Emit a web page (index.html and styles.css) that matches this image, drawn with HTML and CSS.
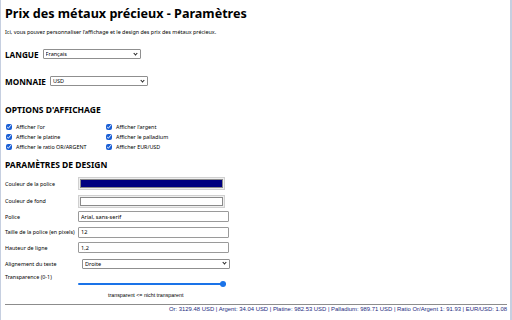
FILE: index.html
```html
<!DOCTYPE html>
<html lang="fr">
<head>
<meta charset="utf-8">
<title>Prix des métaux précieux - Paramètres</title>
<link rel="stylesheet" href="styles.css">
</head>
<body>
<div class="page">
  <h1 class="title">Prix des métaux précieux - Paramètres</h1>
  <p class="intro">Ici, vous pouvez personnaliser l'affichage et le design des prix des métaux précieux.</p>

  <div class="inline-field lang-row">
    <label class="big-label" for="lang">LANGUE</label>
    <span class="sel-wrap"><select id="lang" class="sel sel-lang"><option>Français</option></select></span>
  </div>

  <div class="inline-field cur-row">
    <label class="big-label" for="cur">MONNAIE</label>
    <span class="sel-wrap"><select id="cur" class="sel sel-cur"><option>USD</option></select></span>
  </div>

  <h2 class="section opt-title">OPTIONS D'AFFICHAGE</h2>
  <div class="checks">
    <label class="check"><input type="checkbox" checked> Afficher l'or</label>
    <label class="check"><input type="checkbox" checked> Afficher l'argent</label>
    <label class="check"><input type="checkbox" checked> Afficher le platine</label>
    <label class="check"><input type="checkbox" checked> Afficher le palladium</label>
    <label class="check"><input type="checkbox" checked> Afficher le ratio OR/ARGENT</label>
    <label class="check"><input type="checkbox" checked> Afficher EUR/USD</label>
  </div>

  <h2 class="section design-title">PARAMÈTRES DE DESIGN</h2>
  <div class="design">
    <div class="row r-color1"><span class="lbl">Couleur de la police</span><input class="color" type="color" value="#000080"></div>
    <div class="row r-color2"><span class="lbl">Couleur de fond</span><input class="color" type="color" value="#ffffff"></div>
    <div class="row r-text"><span class="lbl">Police</span><input class="txt" type="text" value="Arial, sans-serif"></div>
    <div class="row r-text"><span class="lbl">Taille de la police (en pixels)</span><input class="txt" type="text" value="12"></div>
    <div class="row r-text"><span class="lbl">Hauteur de ligne</span><input class="txt" type="text" value="1,2"></div>
    <div class="row r-sel"><span class="lbl">Alignement du texte</span><span class="sel-wrap sel-align-wrap"><select class="sel sel-align"><option>Droite</option></select></span></div>
    <div class="row r-transp"><span class="lbl">Transparence (0-1)</span></div>
    <div class="row r-range"><span class="lbl"></span><input class="range" type="range" min="0" max="1" step="0.1" value="1"></div>
    <div class="caption">transparent &lt;= nicht transparent</div>
  </div>

  <hr class="rule">
  <footer class="ticker">Or: 3129.48 USD | Argent: 34.04 USD | Platine: 982.53 USD | Palladium: 989.71 USD | Ratio Or/Argent 1: 91.93 | EUR/USD: 1.08</footer>
</div>
</body>
</html>
```

FILE: styles.css
```css
html, body {
  margin: 0;
  padding: 0;
  background: #ffffff;
}
body {
  font-family: "Noto Sans", "Open Sans", sans-serif;
  color: #000;
}
.page {
  box-sizing: border-box;
  width: 512px;
  height: 320px;
  border-left: 1px solid #c6cfe0;
  border-right: 2px solid #c6cfe0;
  padding: 0 3px 0 4px;
  overflow: hidden;
}
.title {
  margin: 0;
  padding-top: 5px;
  font-size: 12.6px;
  line-height: 18px;
  font-weight: 700;
}
.intro {
  margin: 5px 0 0;
  font-size: 5.4px;
  line-height: 8px;
}
.inline-field {
  display: flex;
  align-items: center;
  gap: 4px;
}
.lang-row { margin-top: 12px; height: 12px; }
.cur-row { margin-top: 15px; height: 12px; }
.big-label {
  font-size: 8.2px;
  font-weight: 700;
}
.sel-wrap {
  position: relative;
  display: inline-block;
  line-height: 0;
}
.sel-wrap::after {
  content: "";
  position: absolute;
  right: 4px;
  top: 2.5px;
  width: 2px;
  height: 2px;
  border-right: 1px solid #222;
  border-bottom: 1px solid #222;
  transform: rotate(45deg);
  pointer-events: none;
}
.sel {
  -webkit-appearance: none;
  appearance: none;
  box-sizing: border-box;
  height: 10px;
  font-family: "Noto Sans", sans-serif;
  font-size: 5.5px;
  line-height: 8px;
  padding: 0 8px 0 2px;
  margin: 0;
  border: 1px solid #8f8f8f;
  border-radius: 1px;
  background: #fff;
  color: #000;
}
.sel-lang { width: 98px; }
.sel-cur { width: 98px; }
.section {
  margin: 0;
  font-size: 8.5px;
  font-weight: 700;
  line-height: 12px;
}
.opt-title { margin-top: 17px; }
.checks {
  margin-top: 6px;
  display: grid;
  grid-template-columns: 100px 100px;
  row-gap: 0;
}
.check {
  display: flex;
  align-items: center;
  gap: 4px;
  height: 10px;
  font-size: 5.4px;
  padding-left: 1px;
}
.check input {
  margin: 0;
  width: 6px;
  height: 6px;
  accent-color: #1a5fd6;
}
.design-title { margin-top: 7px; }
.design {
  margin-top: 5px;
}
.row {
  display: flex;
  align-items: center;
  font-size: 5.4px;
}
.lbl {
  width: 73px;
  flex: none;
}
.r-color1 { height: 15px; }
.r-color2 { height: 16px; margin-top: 2px; }
.r-text { height: 15.5px; }
.r-sel { height: 16px; }
.r-transp { height: 9px; align-items: flex-end; }
.r-transp .lbl { line-height: 7px; }
.r-range { height: 6px; }
.color {
  box-sizing: border-box;
  width: 147px;
  height: 13px;
  padding: 1px;
  margin: 0;
  border: 1px solid #d0d0d0;
  background: #efefef;
  -webkit-appearance: none;
  appearance: none;
}
.color::-webkit-color-swatch-wrapper { padding: 0; }
.color::-webkit-color-swatch { border: 1px solid #8a8a8a; border-radius: 0; }
.txt {
  box-sizing: border-box;
  width: 151px;
  height: 11px;
  margin: 0;
  padding: 0 2px;
  border: 1px solid #9a9a9a;
  border-radius: 1px;
  font-family: "Noto Sans", sans-serif;
  font-size: 5.6px;
}
.sel-align-wrap { margin-left: 4px; }
.sel-align { width: 148px; }
.range {
  -webkit-appearance: none;
  appearance: none;
  width: 148px;
  height: 6px;
  margin: 0;
  background: transparent;
}
.range::-webkit-slider-runnable-track {
  height: 2px;
  background: #1a73e8;
  border-radius: 1px;
}
.range::-webkit-slider-thumb {
  -webkit-appearance: none;
  width: 6px;
  height: 6px;
  border-radius: 50%;
  background: #1a73e8;
  margin-top: -2px;
}
.caption {
  margin-top: 4px;
  padding-left: 103px;
  font-family: "Liberation Sans", Arial, sans-serif;
  font-size: 5.3px;
  line-height: 8px;
}
.rule {
  margin: 5px 0 0;
  border: 0;
  border-top: 1px solid #8c8c8c;
  height: 0;
}
.ticker {
  margin-top: 0;
  text-align: right;
  font-family: "Liberation Sans", Arial, sans-serif;
  font-size: 5.9px;
  line-height: 8px;
  color: #1c2a80;
}
```
